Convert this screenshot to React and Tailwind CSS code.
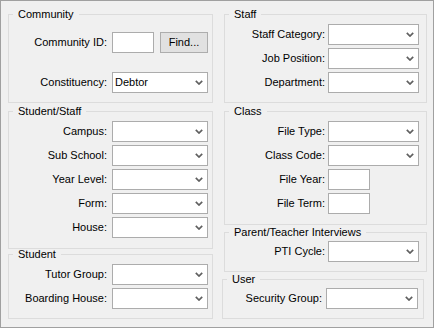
// App.jsx - lookup filter dialog
function Chevron() {
  return (
    <svg width="8" height="5" viewBox="0 0 8 5" className="shrink-0">
      <path d="M0.8 0.8 L4 4 L7.2 0.8" fill="none" stroke="#606060" strokeWidth="1.7" />
    </svg>
  );
}

function Combo({ w, value }) {
  return (
    <div className={`${w} h-[21px] shrink-0 border border-[#acacac] bg-white flex items-center justify-between pl-[2px] pr-[4px]`}>
      <span>{value}</span>
      <Chevron />
    </div>
  );
}

function TextBox() {
  return <div className="w-[42px] h-[21px] shrink-0 border border-[#acacac] bg-white" />;
}

function Row({ label, labelW, gap, children }) {
  return (
    <div className={`flex items-center ${gap}`}>
      <span className={`${labelW} shrink-0 text-right whitespace-nowrap`}>{label}</span>
      {children}
    </div>
  );
}

function Group({ title, className, children }) {
  return (
    <fieldset className={`border border-[#dcdcdc] min-w-0 ${className}`}>
      <legend className="ml-[4px] px-[5px] leading-[13px]">{title}</legend>
      {children}
    </fieldset>
  );
}

export default function App() {
  const left = { labelW: "w-[98px]", gap: "gap-[5px]" };
  const right = { labelW: "w-[100px]", gap: "gap-[3px]" };

  return (
    <div className="w-[434px] h-[328px] border border-[#a0a0a0] bg-[#f0f0f0] flex gap-[9px] pl-[7px] pt-[7px] text-[11px] text-black font-['Liberation_Sans',Arial,sans-serif]">
      {/* left column */}
      <div className="w-[205px] flex flex-col">
        <Group title="Community" className="h-[95px]">
          <div className="flex flex-col gap-[19px] pt-[11px]">
            <Row label="Community ID:" {...left}>
              <TextBox />
              <button className="ml-[1px] w-[48px] h-[21px] border border-[#adadad] bg-[#e1e1e1] leading-none">
                Find...
              </button>
            </Row>
            <Row label="Constituency:" {...left}>
              <Combo w="w-[96px]" value="Debtor" />
            </Row>
          </div>
        </Group>

        <Group title="Student/Staff" className="mt-[2px] h-[144px]">
          <div className="flex flex-col gap-[3px] pt-[3px]">
            {["Campus:", "Sub School:", "Year Level:", "Form:", "House:"].map((l) => (
              <Row key={l} label={l} {...left}>
                <Combo w="w-[96px]" />
              </Row>
            ))}
          </div>
        </Group>

        <Group title="Student" className="-mt-[1px] h-[71px]">
          <div className="flex flex-col gap-[3px] pt-[3px]">
            <Row label="Tutor Group:" {...left}>
              <Combo w="w-[96px]" />
            </Row>
            <Row label="Boarding House:" {...left}>
              <Combo w="w-[96px]" />
            </Row>
          </div>
        </Group>
      </div>

      {/* right column */}
      <div className="w-[205px] flex flex-col">
        <Group title="Staff" className="ml-[2px] h-[95px]">
          <div className="flex flex-col gap-[3px] pt-[3px]">
            {["Staff Category:", "Job Position:", "Department:"].map((l) => (
              <Row key={l} label={l} {...right}>
                <Combo w="w-[91px]" />
              </Row>
            ))}
          </div>
        </Group>

        <Group title="Class" className="ml-[2px] mt-[2px] h-[120px]">
          <div className="flex flex-col gap-[3px] pt-[3px]">
            <Row label="File Type:" {...right}>
              <Combo w="w-[91px]" />
            </Row>
            <Row label="Class Code:" {...right}>
              <Combo w="w-[91px]" />
            </Row>
            <Row label="File Year:" {...right}>
              <TextBox />
            </Row>
            <Row label="File Term:" {...right}>
              <TextBox />
            </Row>
          </div>
        </Group>

        <Group title="Parent/Teacher Interviews" className="ml-[2px] mt-[1px] h-[46px]">
          <div className="pt-[2px]">
            <Row label="PTI Cycle:" {...right}>
              <Combo w="w-[91px]" />
            </Row>
          </div>
        </Group>

        <Group title="User" className="mt-[1px] mr-[3px] h-[46px]">
          <div className="pt-[2px]">
            <Row label="Security Group:" labelW="w-[99px]" gap="gap-[4px]">
              <Combo w="w-[92px]" />
            </Row>
          </div>
        </Group>
      </div>
    </div>
  );
}
